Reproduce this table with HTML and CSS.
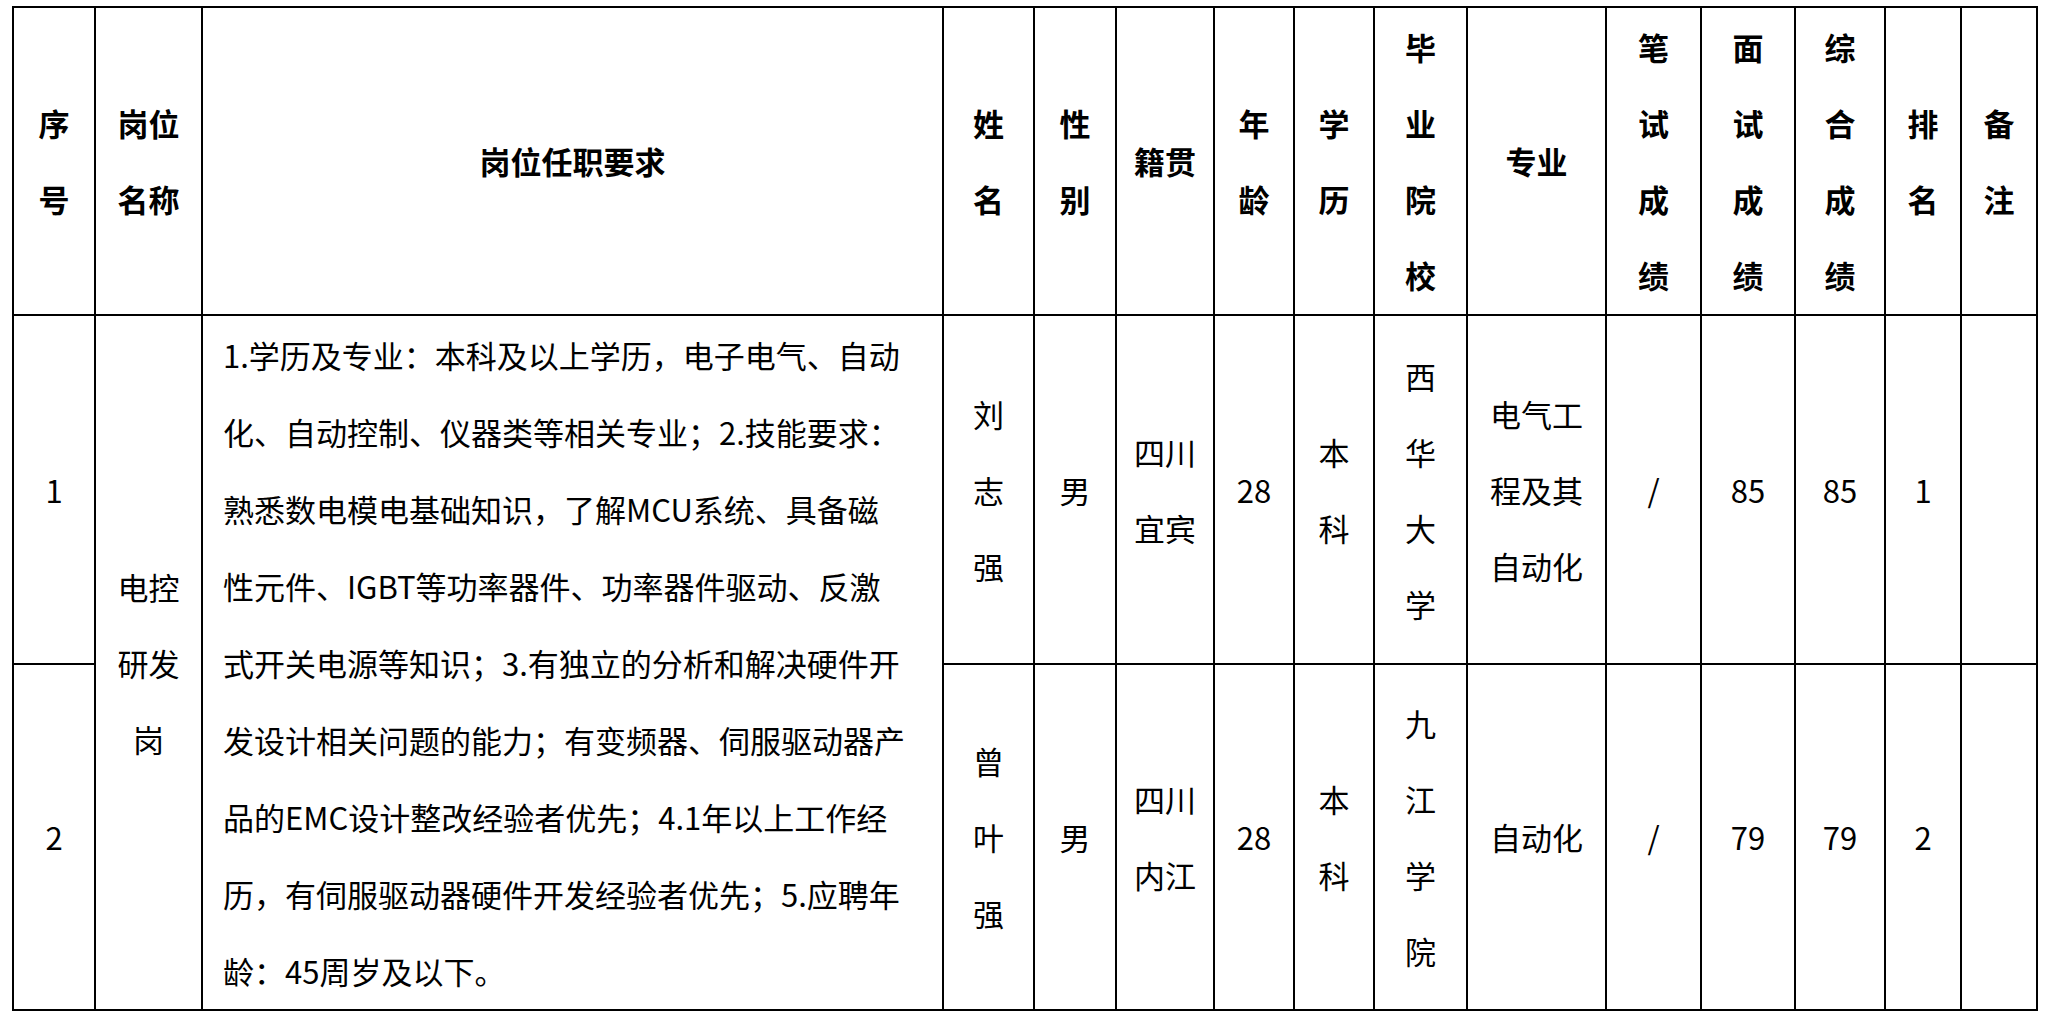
FILE: index.html
```html
<!DOCTYPE html>
<html lang="zh-CN">
<head>
<meta charset="utf-8">
<title>岗位招聘成绩表</title>
<link rel="stylesheet" href="styles.css">
</head>
<body>
<div class="page">
<table class="sheet">
  <colgroup>
    <col class="c-no">
    <col class="c-post">
    <col class="c-req">
    <col class="c-name">
    <col class="c-sex">
    <col class="c-home">
    <col class="c-age">
    <col class="c-edu">
    <col class="c-school">
    <col class="c-major">
    <col class="c-written">
    <col class="c-interview">
    <col class="c-total">
    <col class="c-rank">
    <col class="c-note">
  </colgroup>
  <thead>
    <tr class="head-row">
      <th>序<br>号</th>
      <th>岗位<br>名称</th>
      <th>岗位任职要求</th>
      <th>姓<br>名</th>
      <th>性<br>别</th>
      <th>籍贯</th>
      <th>年<br>龄</th>
      <th>学<br>历</th>
      <th>毕<br>业<br>院<br>校</th>
      <th>专业</th>
      <th>笔<br>试<br>成<br>绩</th>
      <th>面<br>试<br>成<br>绩</th>
      <th>综<br>合<br>成<br>绩</th>
      <th>排<br>名</th>
      <th>备<br>注</th>
    </tr>
  </thead>
  <tbody>
    <tr class="row-1">
      <td>1</td>
      <td rowspan="2">电控<br>研发<br>岗</td>
      <td rowspan="2" class="req">1.学历及专业：本科及以上学历，电子电气、自动<br>化、自动控制、仪器类等相关专业；2.技能要求：<br>熟悉数电模电基础知识，了解MCU系统、具备磁<br>性元件、IGBT等功率器件、功率器件驱动、反激<br>式开关电源等知识；3.有独立的分析和解决硬件开<br>发设计相关问题的能力；有变频器、伺服驱动器产<br>品的EMC设计整改经验者优先；4.1年以上工作经<br>历，有伺服驱动器硬件开发经验者优先；5.应聘年<br>龄：45周岁及以下。</td>
      <td>刘<br>志<br>强</td>
      <td>男</td>
      <td>四川<br>宜宾</td>
      <td>28</td>
      <td>本<br>科</td>
      <td>西<br>华<br>大<br>学</td>
      <td>电气工<br>程及其<br>自动化</td>
      <td>/</td>
      <td>85</td>
      <td>85</td>
      <td>1</td>
      <td></td>
    </tr>
    <tr class="row-2">
      <td>2</td>
      <td>曾<br>叶<br>强</td>
      <td>男</td>
      <td>四川<br>内江</td>
      <td>28</td>
      <td>本<br>科</td>
      <td>九<br>江<br>学<br>院</td>
      <td>自动化</td>
      <td>/</td>
      <td>79</td>
      <td>79</td>
      <td>2</td>
      <td></td>
    </tr>
  </tbody>
</table>
</div>
</body>
</html>
```

FILE: styles.css
```css
html, body {
  margin: 0;
  padding: 0;
  background: #ffffff;
}

.page {
  padding: 6px 0 0 12px;
}

.sheet {
  border-collapse: collapse;
  table-layout: fixed;
  width: 2026px;
  font-family: "Noto Sans CJK SC", "Noto Sans", sans-serif;
  font-size: 31px;
  color: #000000;
}

.sheet th,
.sheet td {
  border: 2px solid #000000;
  padding: 0;
  text-align: center;
  vertical-align: middle;
  line-height: 76px;
  white-space: nowrap;
}

.sheet th {
  font-weight: 700;
}

.sheet td {
  font-weight: 400;
}

.head-row { height: 308px; }
.row-1 { height: 348px; }
.row-2 { height: 345px; }

.sheet td.req {
  text-align: left;
  padding-left: 20px;
  line-height: 77px;
}

.c-no { width: 82px; }
.c-post { width: 107px; }
.c-req { width: 741px; }
.c-name { width: 91px; }
.c-sex { width: 82px; }
.c-home { width: 98px; }
.c-age { width: 80px; }
.c-edu { width: 80px; }
.c-school { width: 93px; }
.c-major { width: 139px; }
.c-written { width: 95px; }
.c-interview { width: 94px; }
.c-total { width: 90px; }
.c-rank { width: 76px; }
.c-note { width: 76px; }
```
